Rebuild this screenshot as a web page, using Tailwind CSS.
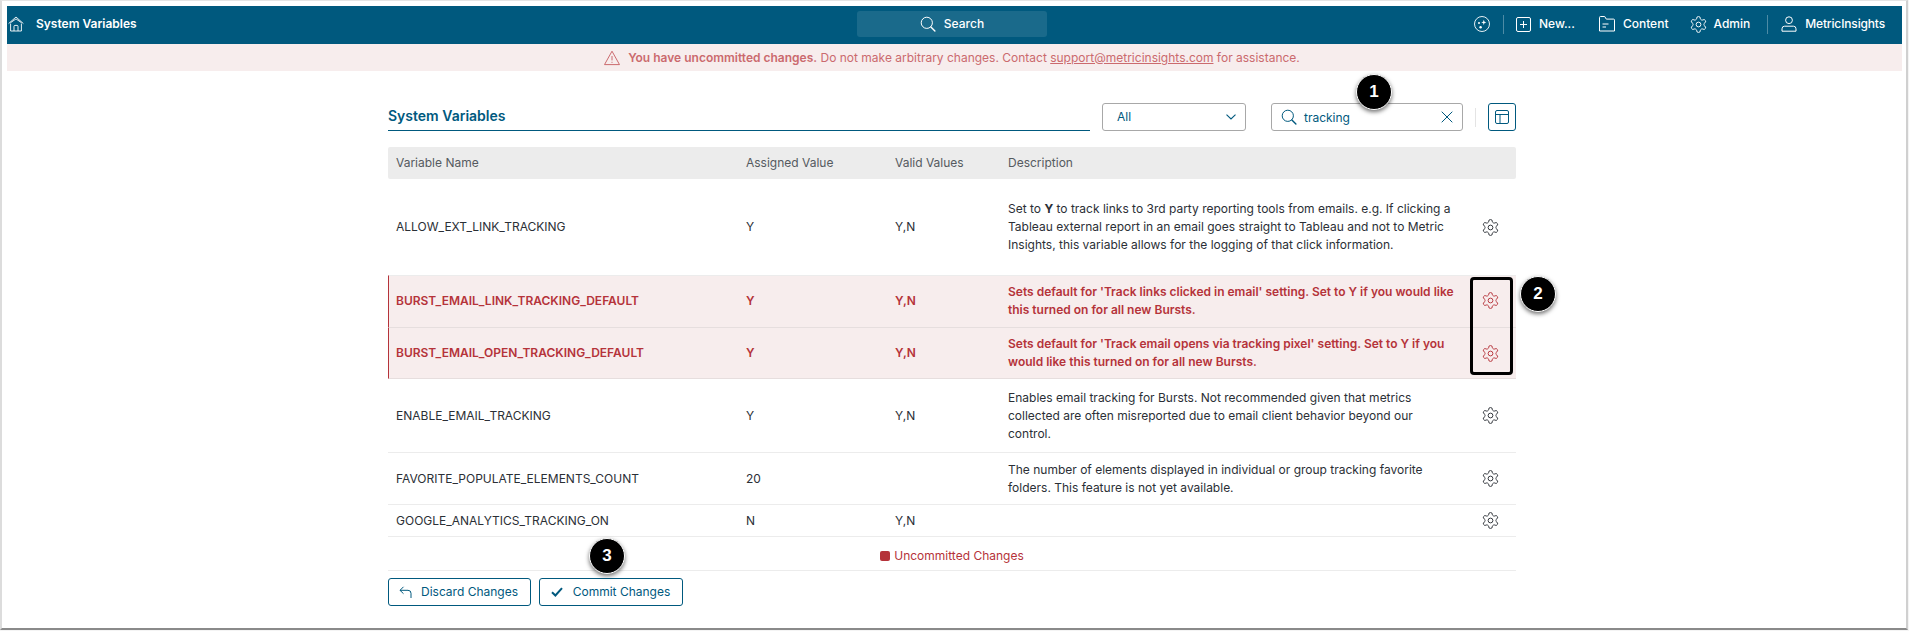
<!DOCTYPE html>
<html lang="en">
<head>
    <meta charset="UTF-8">
    <title>System Variables</title>
    <script src="https://cdn.jsdelivr.net/npm/@tailwindcss/browser@4"></script>
</head>
<body class="bg-[#f4f4f4] h-[631px] overflow-hidden font-['Inter',sans-serif] text-[12px] text-[#2b2f36]">
    <!-- icon sprites -->
    <svg class="hidden">
        <symbol id="gear" viewBox="0 0 24 24">
            <path fill="none" stroke="currentColor" stroke-width="1.2" stroke-linejoin="round" d="M12.22 2h-.44a2 2 0 0 0-2 2v.18a2 2 0 0 1-1 1.73l-.43.25a2 2 0 0 1-2 0l-.15-.08a2 2 0 0 0-2.73.73l-.22.38a2 2 0 0 0 .73 2.73l.15.1a2 2 0 0 1 1 1.72v.51a2 2 0 0 1-1 1.74l-.15.09a2 2 0 0 0-.73 2.73l.22.38a2 2 0 0 0 2.73.73l.15-.08a2 2 0 0 1 2 0l.43.25a2 2 0 0 1 1 1.73V20a2 2 0 0 0 2 2h.44a2 2 0 0 0 2-2v-.18a2 2 0 0 1 1-1.73l.43-.25a2 2 0 0 1 2 0l.15.08a2 2 0 0 0 2.73-.73l.22-.39a2 2 0 0 0-.73-2.73l-.15-.08a2 2 0 0 1-1-1.74v-.5a2 2 0 0 1 1-1.74l.15-.09a2 2 0 0 0 .73-2.73l-.22-.38a2 2 0 0 0-2.73-.73l-.15.08a2 2 0 0 1-2 0l-.43-.25a2 2 0 0 1-1-1.73V4a2 2 0 0 0-2-2z"/>
            <circle cx="12" cy="12" r="3" fill="none" stroke="currentColor" stroke-width="1.2"/>
        </symbol>
        <symbol id="search" viewBox="0 0 16 16">
            <circle cx="6.8" cy="6.8" r="5.6" fill="none" stroke="currentColor" stroke-width="1"/>
            <path d="M10.9 10.9l4 4" fill="none" stroke="currentColor" stroke-width="1.4" stroke-linecap="round"/>
        </symbol>
    </svg>

    <div class="relative w-[1908px] h-[630px] bg-white border-t border-t-[#e4e4e4] border-l-2 border-l-[#dcdcdc] border-r-2 border-r-[#d0d0d0] border-b-2 border-b-[#8a8a8a] pt-[5px] pl-[5px] pr-[4px]">

        <!-- top nav -->
        <nav class="flex items-center h-[38px] pb-[2px] bg-[#00597e] text-white font-medium">
            <div class="flex items-center w-[850px]">
                <svg class="w-4 h-4 ml-[1px]" viewBox="0 0 16 16" fill="none" stroke="currentColor" stroke-width="0.9" stroke-linejoin="round">
                    <path d="M0.6 7.6L8 1l7.4 6.6"/>
                    <path d="M2.4 6.8L8 2.9l5.6 3.9"/>
                    <path d="M2.6 7.6V15h10.8V7.6"/>
                    <path d="M6 15v-4.6a1 1 0 0 1 1-1h2a1 1 0 0 1 1 1V15"/>
                </svg>
                <span class="ml-3 font-semibold">System Variables</span>
            </div>
            <div class="flex items-center justify-center gap-2 w-[190px] h-[26px] rounded-[3px] bg-white/10">
                <svg class="w-4 h-4 text-white"><use href="#search"/></svg>
                <span>Search</span>
            </div>
            <div class="flex flex-1 items-center justify-end pr-[17px]">
                <svg class="w-4 h-4" viewBox="0 0 16 16" fill="none" stroke="currentColor" stroke-width="0.9">
                    <circle cx="8" cy="8" r="7.5"/>
                    <path fill="currentColor" stroke="none" d="M9.8 3.8l.7 1.9 1.9.7-1.9.7-.7 1.9-.7-1.9-1.9-.7 1.9-.7z"/>
                    <circle cx="5" cy="7" r="1" fill="currentColor" stroke="none"/>
                    <circle cx="6.6" cy="11.2" r="1.2" fill="currentColor" stroke="none"/>
                </svg>
                <span class="w-px h-[19px] bg-white/30 ml-[13px] mr-3"></span>
                <svg class="w-[15px] h-[15px] mr-2" viewBox="0 0 15 15" fill="none" stroke="currentColor" stroke-width="1">
                    <rect x="0.5" y="0.5" width="14" height="14" rx="1.5"/>
                    <path d="M7.5 4v7M4 7.5h7"/>
                </svg>
                <span>New...</span>
                <svg class="w-4 h-4 ml-6 mr-2" viewBox="0 0 16 16" fill="none" stroke="currentColor" stroke-width="1" stroke-linejoin="round">
                    <path d="M0.5 15V1.5a1 1 0 0 1 1-1h4.2l1.6 2.6h7.2a1 1 0 0 1 1 1V15z"/>
                    <path d="M3.5 8h6M3.5 11h3.5"/>
                </svg>
                <span>Content</span>
                <svg class="w-[19px] h-[19px] ml-[21px] mr-[5px] text-white"><use href="#gear"/></svg>
                <span>Admin</span>
                <span class="w-px h-[19px] bg-white/30 ml-[17px] mr-[13px]"></span>
                <svg class="w-4 h-4 mr-2" viewBox="0 0 16 16" fill="none" stroke="currentColor" stroke-width="1">
                    <circle cx="8" cy="4.2" r="3.4"/>
                    <path d="M1 15.2v-2.4a2.6 2.6 0 0 1 2.6-2.6h8.8a2.6 2.6 0 0 1 2.6 2.6v2.4z"/>
                </svg>
                <span class="tracking-[-0.15px]">MetricInsights</span>
            </div>
        </nav>

        <!-- uncommitted banner -->
        <div class="flex items-center justify-center gap-2 h-[27px] pr-[5px] bg-[#f7eded] text-[#cb6a6e]">
            <svg class="w-4 h-4" viewBox="0 0 16 16" fill="none" stroke="currentColor" stroke-width="1" stroke-linejoin="round">
                <path d="M8 1.2L15.5 14.6H.5z"/>
                <path d="M8 6v4.4M8 11.8v1"/>
            </svg>
            <span><b class="font-semibold">You have uncommitted changes.</b> Do not make arbitrary changes. Contact <u>support@metricinsights.com</u> for assistance.</span>
        </div>

        <!-- content -->
        <main class="w-[1128px] ml-[381px] pt-8">
            <div class="flex items-center h-[28px]">
                <div class="w-[702px] h-[28px] border-b border-b-[#00597e] text-[14px] font-semibold text-[#00597e] leading-[26px]">System Variables</div>
                <div class="flex items-center justify-between w-[144px] h-[28px] ml-3 pl-[14px] pr-[9px] border border-[#a8a8a8] rounded-[3px] text-[#00597e]">
                    <span>All</span>
                    <svg class="w-[10px] h-[6px]" viewBox="0 0 10 6" fill="none" stroke="currentColor" stroke-width="1.1"><path d="M.5.7L5 5l4.5-4.3"/></svg>
                </div>
                <div class="flex items-center w-[192px] h-[28px] ml-[25px] px-[9px] border border-[#a8a8a8] rounded-[3px] text-[#00597e]">
                    <svg class="w-4 h-4"><use href="#search"/></svg>
                    <span class="ml-[7px] pt-[1px] flex-1">tracking</span>
                    <svg class="w-3 h-3" viewBox="0 0 12 12" fill="none" stroke="currentColor" stroke-width="1"><path d="M.7.7l10.6 10.6M11.3.7L.7 11.3"/></svg>
                </div>
                <span class="w-px h-[19px] bg-[#e4e4e4] ml-[12px] mr-[12px]"></span>
                <div class="flex items-center justify-center w-[28px] h-[28px] border border-[#00597e] rounded-[3px] text-[#00597e]">
                    <svg class="w-[14px] h-[14px]" viewBox="0 0 14 14" fill="none" stroke="currentColor" stroke-width="1">
                        <rect x="0.5" y="0.5" width="13" height="13" rx="1.5"/>
                        <path d="M.5 4.5h13M5 4.5v9"/>
                    </svg>
                </div>
            </div>

            <!-- table -->
            <div class="grid grid-cols-[350px_149px_113px_466px_50px] items-center h-[32px] mt-4 rounded-[2px] bg-[#ececec] text-[#555a60]">
                <div class="px-2">Variable Name</div>
                <div class="px-2">Assigned Value</div>
                <div class="px-2">Valid Values</div>
                <div class="px-2">Description</div>
                <div></div>
            </div>

            <div class="grid grid-cols-[350px_149px_113px_466px_50px] items-center h-[96px] leading-[18px]">
                <div class="px-2">ALLOW_EXT_LINK_TRACKING</div>
                <div class="px-2">Y</div>
                <div class="px-2">Y,N</div>
                <div class="px-2">Set to <b>Y</b> to track links to 3rd party reporting tools from emails. e.g. If clicking a Tableau external report in an email goes straight to Tableau and not to Metric Insights, this variable allows for the logging of that click information.</div>
                <svg class="w-[19px] h-[19px] ml-[15px]"><use href="#gear"/></svg>
            </div>

            <div class="grid grid-cols-[350px_149px_113px_466px_50px] items-center h-[52px] pb-[2px] leading-[18px] bg-[#f7eded] border-t border-t-[#ececec] border-l border-l-[#b5333a] font-semibold text-[#b5333a]">
                <div class="px-2 -ml-px">BURST_EMAIL_LINK_TRACKING_DEFAULT</div>
                <div class="px-2 -ml-px">Y</div>
                <div class="px-2 -ml-px">Y,N</div>
                <div class="px-2 -ml-px">Sets default for 'Track links clicked in email' setting. Set to Y if you would like this turned on for all new Bursts.</div>
                <svg class="w-[19px] h-[19px] ml-[14px]"><use href="#gear"/></svg>
            </div>

            <div class="grid grid-cols-[350px_149px_113px_466px_50px] items-center h-[52px] leading-[18px] bg-[#f7eded] border-t border-t-[#e6dede] border-b border-b-[#e6dede] border-l border-l-[#b5333a] font-semibold text-[#b5333a]">
                <div class="px-2 -ml-px">BURST_EMAIL_OPEN_TRACKING_DEFAULT</div>
                <div class="px-2 -ml-px">Y</div>
                <div class="px-2 -ml-px">Y,N</div>
                <div class="px-2 -ml-px">Sets default for 'Track email opens via tracking pixel' setting. Set to Y if you would like this turned on for all new Bursts.</div>
                <svg class="w-[19px] h-[19px] ml-[14px]"><use href="#gear"/></svg>
            </div>

            <div class="grid grid-cols-[350px_149px_113px_466px_50px] items-center h-[74px] leading-[18px] border-b border-b-[#ececec]">
                <div class="px-2">ENABLE_EMAIL_TRACKING</div>
                <div class="px-2">Y</div>
                <div class="px-2">Y,N</div>
                <div class="px-2">Enables email tracking for Bursts. Not recommended given that metrics collected are often misreported due to email client behavior beyond our control.</div>
                <svg class="w-[19px] h-[19px] ml-[15px]"><use href="#gear"/></svg>
            </div>

            <div class="grid grid-cols-[350px_149px_113px_466px_50px] items-center h-[52px] leading-[18px] border-b border-b-[#ececec]">
                <div class="px-2">FAVORITE_POPULATE_ELEMENTS_COUNT</div>
                <div class="px-2">20</div>
                <div class="px-2"></div>
                <div class="px-2">The number of elements displayed in individual or group tracking favorite folders. This feature is not yet available.</div>
                <svg class="w-[19px] h-[19px] ml-[15px]"><use href="#gear"/></svg>
            </div>

            <div class="grid grid-cols-[350px_149px_113px_466px_50px] items-center h-[32px] leading-[18px] border-b border-b-[#ececec]">
                <div class="px-2">GOOGLE_ANALYTICS_TRACKING_ON</div>
                <div class="px-2">N</div>
                <div class="px-2">Y,N</div>
                <div class="px-2"></div>
                <svg class="w-[19px] h-[19px] ml-[15px]"><use href="#gear"/></svg>
            </div>

            <div class="flex items-center justify-center gap-[4px] h-[34px] pt-[4px] border-b border-b-[#ececec] text-[#b5333a]">
                <span class="w-[10px] h-[10px] rounded-[2px] bg-[#b5333a]"></span>
                <span>Uncommitted Changes</span>
            </div>

            <div class="flex gap-[8px] mt-[7px]">
                <div class="flex items-center justify-center gap-2 w-[143px] h-[28px] pr-[2px] border border-[#00597e] rounded-[3px] text-[#00597e]">
                    <svg class="w-[14px] h-[12px]" viewBox="0 0 14 12" fill="none" stroke="currentColor" stroke-width="1"><path d="M4.5.8L1 4.3l3.5 3.4M1 4.3h8a3 3 0 0 1 3 3V12"/></svg>
                    <span>Discard Changes</span>
                </div>
                <div class="flex items-center justify-center gap-[10px] w-[144px] h-[28px] pr-[1px] border border-[#00597e] rounded-[3px] text-[#00597e]">
                    <svg class="w-[12px] h-[10px]" viewBox="0 0 12 10" fill="none" stroke="currentColor" stroke-width="2"><path d="M1 5.2l3.4 3.3L11 1.2"/></svg>
                    <span>Commit Changes</span>
                </div>
            </div>
        </main>

        <!-- annotations drawn over the screenshot -->
        <div class="absolute left-[1468px] top-[276px] w-[43px] h-[98px] border-[3px] border-black rounded-[4px]"></div>
        <div class="absolute left-[1354px] top-[73px] flex items-center justify-center w-[36px] h-[36px] rounded-full bg-black border border-white shadow-[0_2px_4px_rgba(0,0,0,0.55)] font-['Liberation_Sans',sans-serif] font-bold text-[17px] text-white">1</div>
        <div class="absolute left-[1518px] top-[275px] flex items-center justify-center w-[36px] h-[36px] rounded-full bg-black border border-white shadow-[0_2px_4px_rgba(0,0,0,0.55)] font-['Liberation_Sans',sans-serif] font-bold text-[17px] text-white">2</div>
        <div class="absolute left-[587px] top-[537px] flex items-center justify-center w-[36px] h-[36px] rounded-full bg-black border border-white shadow-[0_2px_4px_rgba(0,0,0,0.55)] font-['Liberation_Sans',sans-serif] font-bold text-[17px] text-white">3</div>
    </div>
</body>
</html>
